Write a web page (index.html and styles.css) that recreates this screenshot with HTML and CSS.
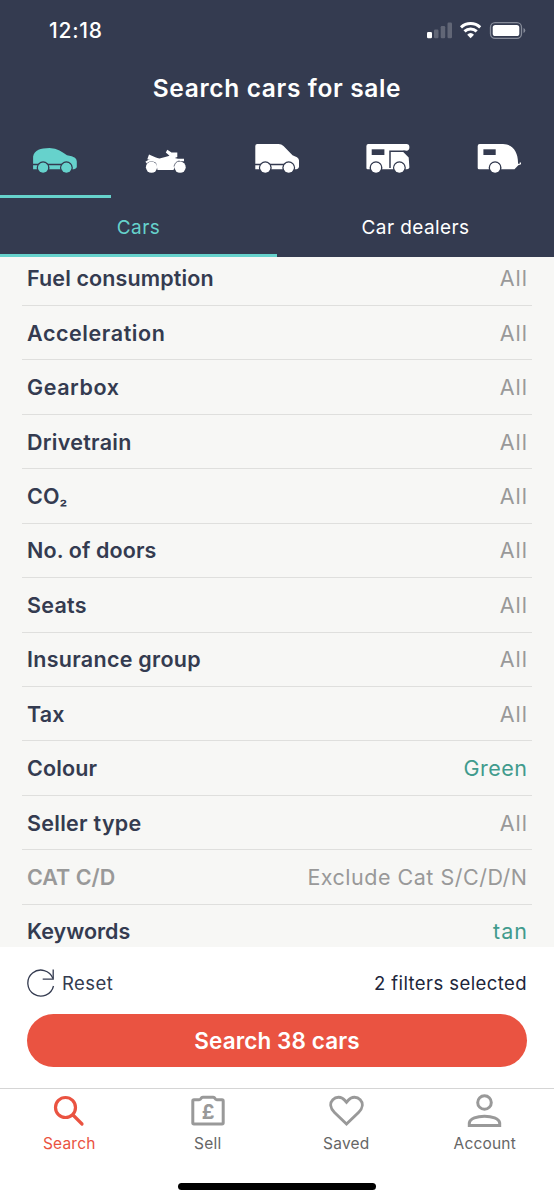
FILE: index.html
```html
<!DOCTYPE html>
<html lang="en">
<head>
<meta charset="utf-8">
<title>Search cars for sale</title>
<link rel="stylesheet" href="styles.css">
</head>
<body>
<div class="app">
  <header class="header">
    <div class="status">
      <span class="time">12:18</span>
      <svg class="status-icons" width="100" height="20" viewBox="0 0 100 20">
        <g fill="#fff">
          <rect x="1" y="12" width="5" height="6.300" rx="1.200"/>
          <g opacity=".22"><rect x="8" y="9.500" width="4.500" height="8.800" rx="1.200"/><rect x="14.700" y="6" width="4.500" height="12.300" rx="1.200"/><rect x="21.500" y="2.500" width="4.500" height="15.800" rx="1.200"/></g>
        </g>
        <g fill="none" stroke="#fff" stroke-width="3">
          <path d="M35 7.300a14.200 14.200 0 0 1 19.200 0"/>
          <path d="M38.500 11.400a9 9 0 0 1 12.200 0"/>
        </g>
        <path d="M41.200 14.700a5 5 0 0 1 6.800 0L44.600 18.300z" fill="#fff"/>
        <rect x="64.500" y="2.700" width="31" height="15.600" rx="4.600" fill="none" stroke="#868b99" stroke-width="1.300"/>
        <rect x="66.700" y="4.900" width="26.600" height="11.200" rx="2.600" fill="#fff"/>
        <path d="M97.500 8v5q1.800-.8 1.800-2.500t-1.800-2.500z" fill="#868b99"/>
      </svg>
    </div>
    <h1 class="title">Search cars for sale</h1>
    <nav class="vehicles">
      <a class="vehicle vehicle-active">
        <svg width="48" height="32" viewBox="-.500 0 48 32">
          <path fill="#66d2cc" d="M1.600 27.300V14.500Q2.500 10 7 7.800Q11 6 18 6Q24 6 28 8.500Q31.500 10.500 35.500 13.300Q41 14 43.500 15.800Q45.300 17.300 45.300 19.500V25.300Q44.500 27 42.500 27.300z"/>
          <g class="cutout"><path d="M1 22.500H35"/><circle cx="11.600" cy="25.700" r="5.700"/><circle cx="34.900" cy="25.700" r="5.700"/></g>
          <g fill="#66d2cc"><circle cx="11.600" cy="25.700" r="5"/><circle cx="34.900" cy="25.700" r="5"/></g>
        </svg>
      </a>
      <a class="vehicle">
        <svg width="48" height="32" viewBox="0 0 48 32" fill="#fff">
          <circle cx="9.500" cy="25.200" r="5.600"/><circle cx="38.100" cy="25.200" r="5.600"/>
          <path d="M7 12.500L13.300 15.300Q16 16.700 18.500 16.300L25 14.500L27.500 13.800L23.800 10.500L25.300 7.800L29.500 10.500H35.300V15L32.800 16L36 16.800H42V19.300H37L34 21.800L31.500 28H15.500L14 20Q10 18 5.300 17.200z"/>
          <path d="M4 20.500Q10 15.500 16 21" fill="none" stroke="#fff" stroke-width="2"/>
          <path d="M32 17L38 25" fill="none" stroke="#fff" stroke-width="2"/>
          <path d="M32 24.500Q33 19.500 37.500 18.900" fill="none" stroke="#343b50" stroke-width=".7"/>
        </svg>
      </a>
      <a class="vehicle">
        <svg width="48" height="32" viewBox="0 0 48 32">
          <path fill="#fff" d="M2.300 27.300V4Q2.300 2 4.300 2H25.500Q28.500 2 30.500 4L39.500 13.200L44 15.200Q46 16.500 46 18.500V25Q45.500 27 43.500 27.300z"/>
          <g class="cutout"><path d="M2 22.500H35"/><circle cx="12.300" cy="25.700" r="5.700"/><circle cx="35.700" cy="25.700" r="5.700"/></g>
          <g fill="#fff"><circle cx="12.300" cy="25.700" r="5"/><circle cx="35.700" cy="25.700" r="5"/></g>
        </svg>
      </a>
      <a class="vehicle">
        <svg width="48" height="32" viewBox=".500 0 48 32">
          <path fill="#fff" d="M2.900 26V4Q2.900 2 4.900 2H42.900Q45.900 2 45.900 5.300T42.900 8.700H39.500L39.500 9.700L45.200 15.500L45.900 25.500Q45.500 27.300 43.500 27.300H4.200Q2.900 27.300 2.900 26z"/>
          <path fill="#343b50" d="M8.200 7.300H20.900V13H8.200z"/>
          <g class="cutout"><path d="M26.500 26V9.300H42"/><circle cx="12.500" cy="25.700" r="5.700"/><circle cx="35.900" cy="25.700" r="5.700"/></g>
          <g fill="#fff"><circle cx="12.500" cy="25.700" r="5"/><circle cx="35.900" cy="25.700" r="5"/></g>
        </svg>
      </a>
      <a class="vehicle">
        <svg width="48" height="32" viewBox="0 0 48 32">
          <path fill="#fff" d="M2.700 26V4Q2.700 2 4.700 2H28C38 2.300 43 10 43 20.500V21.700H44.700V20.500H46V22.300L43.300 23.300L39.500 27.300H4Q2.700 27.300 2.700 26z"/>
          <path fill="#343b50" d="M8.400 7.300H20.700V13H8.400z"/>
          <g class="cutout"><circle cx="20.100" cy="25.700" r="5.700"/></g>
          <circle cx="20.100" cy="25.700" r="5" fill="#fff"/>
        </svg>
      </a>
    </nav>
    <nav class="tabs">
      <a class="tab tab-active">Cars</a>
      <a class="tab">Car dealers</a>
    </nav>
  </header>

  <main class="list">
    <div class="row"><span class="label snug">Fuel consumption</span><span class="value wide">All</span></div>
    <div class="row"><span class="label loose">Acceleration</span><span class="value wide">All</span></div>
    <div class="row"><span class="label loose">Gearbox</span><span class="value wide">All</span></div>
    <div class="row"><span class="label">Drivetrain</span><span class="value wide">All</span></div>
    <div class="row"><span class="label snug">CO<span class="subscript">₂</span></span><span class="value wide">All</span></div>
    <div class="row"><span class="label snug">No. of doors</span><span class="value wide">All</span></div>
    <div class="row"><span class="label">Seats</span><span class="value wide">All</span></div>
    <div class="row"><span class="label">Insurance group</span><span class="value wide">All</span></div>
    <div class="row"><span class="label snug">Tax</span><span class="value wide">All</span></div>
    <div class="row"><span class="label snug">Colour</span><span class="value chosen">Green</span></div>
    <div class="row"><span class="label">Seller type</span><span class="value wide">All</span></div>
    <div class="row disabled"><span class="label tight">CAT C/D</span><span class="value">Exclude Cat S/C/D/N</span></div>
    <div class="row"><span class="label tight">Keywords</span><span class="value wide chosen">tan</span></div>
  </main>

  <section class="actions">
    <div class="summary">
      <span class="reset">
        <svg width="28" height="28" viewBox="0 0 28 28" fill="none" stroke="#343b50" stroke-width="1.300">
          <path d="M26 9.500A13 13 0 1 0 26.500 17"/><path d="M26.200.5V10.200H15.700"/>
        </svg>
        <span>Reset</span>
      </span>
      <span class="count">2 filters selected</span>
    </div>
    <button class="search">Search 38 cars</button>
  </section>

  <footer class="footer">
    <nav class="nav">
      <a class="nav-item nav-active">
        <svg width="36" height="36" viewBox="0 0 36 36" fill="none" stroke="#ea5341" stroke-width="3.200" stroke-linecap="round"><circle cx="14.500" cy="15.500" r="10"/><path d="M22 23L31 32"/></svg>
        <span>Search</span>
      </a>
      <a class="nav-item">
        <svg width="36" height="36" viewBox="0 0 36 36"><path fill="none" stroke="#999" stroke-width="3" stroke-linejoin="round" d="M4 7.700H9.200Q10.500 7.700 11 6.500Q11.600 5.300 12.800 5.300H23.200Q24.400 5.300 25 6.500Q25.500 7.700 26.800 7.700H32Q33.200 7.700 33.200 8.900V30.700Q33.200 31.900 32 31.900H4Q2.800 31.900 2.800 30.700V8.900Q2.800 7.700 4 7.700z"/><text class="pound" x="18.300" y="26.700">£</text></svg>
        <span>Sell</span>
      </a>
      <a class="nav-item">
        <svg width="36" height="36" viewBox="-.500 0 36 36" fill="none" stroke="#999" stroke-width="2.900"><path d="M18 32L6 20.500C1.500 16 1.200 11 4.300 7.700C7.500 4.200 13 4.400 16 8L18 10.300L20 8C23 4.400 28.500 4.200 31.700 7.700C34.800 11 34.500 16 30 20.500z"/></svg>
        <span>Saved</span>
      </a>
      <a class="nav-item">
        <svg width="36" height="36" viewBox=".500 .500 36 36" fill="none" stroke="#999" stroke-width="3"><circle cx="18" cy="11" r="6.800"/><path d="M2.800 34V31.500C4 22.500 32 22.500 33.200 31.500V34z"/></svg>
        <span>Account</span>
      </a>
    </nav>
    <div class="home-bar"></div>
  </footer>
</div>
</body>
</html>
```
FILE: styles.css
```css
* { box-sizing: border-box; }
body { margin: 0; font-family: Inter, "Open Sans", sans-serif; background: #fff; }
.app { width: 554px; height: 1200px; display: flex; flex-direction: column; overflow: hidden; }
.header { height: 257px; flex: none; background: #343b50; color: #fff; display: flex; flex-direction: column; }
.status { height: 60px; padding: 0 28.500px 0 49px; display: flex; justify-content: space-between; align-items: center; }
.time { font-size: 21px; font-weight: 500; line-height: 24px; letter-spacing: .75px; padding-top: 2px; }
.title { margin: 0; height: 56px; line-height: 56px; text-align: center; font-size: 24.500px; font-weight: 600; letter-spacing: .65px; }
.vehicles { height: 82px; display: grid; grid-template-columns: repeat(5, 1fr); }
.vehicle { display: flex; justify-content: center; align-items: flex-start; padding-top: 26px; border-bottom: 2px solid transparent; }
.vehicle svg { display: block; }
.vehicle-active { border-bottom-width: 3px; border-color: #66d2cc; }
.cutout { fill: none; stroke: #343b50; stroke-width: 1.500; }
.tabs { height: 59px; display: grid; grid-template-columns: 1fr 1fr; }
.tab { display: flex; justify-content: center; align-items: center; font-size: 19px; letter-spacing: .4px; padding-top: 2px; border-bottom: 3px solid transparent; }
.tab-active { color: #66d2cc; border-color: #66d2cc; }
.list { height: 690px; flex: none; background: #f7f7f5; padding: 0 22px; overflow: hidden; }
.row { height: 54.450px; padding: 0 5px; display: flex; justify-content: space-between; align-items: center; border-bottom: 1px solid #dfdfdd; font-size: 21.500px; color: #999; }
.row:first-child { margin-top: -5.500px; }
.label { font-weight: 600; color: #343b50; letter-spacing: .28px; }
.snug { letter-spacing: .12px; }
.loose { letter-spacing: .57px; }
.tight { letter-spacing: 0; }
.subscript { font-size: 17px; }
.value { letter-spacing: .5px; margin-right: -.5px; }
.wide { letter-spacing: 1px; margin-right: -1px; }
.disabled .label { color: #999; }
.chosen { color: #419b8d; }
.actions { height: 141px; flex: none; padding: 22px 27px 0; color: #343b50; }
.summary { height: 28px; display: flex; justify-content: space-between; align-items: center; font-size: 18.500px; letter-spacing: .42px; }
.reset { display: flex; align-items: center; gap: 7px; }
.count { color: #20253a; }
.search { display: block; width: 100%; height: 53px; margin-top: 17px; padding: 0; border: 0; border-radius: 27px; background: #ea5341; color: #fff; font: 600 22.500px/53px Inter, sans-serif; letter-spacing: .1px; }
.footer { height: 112px; flex: none; border-top: 1px solid #d5d5d5; display: flex; flex-direction: column; align-items: center; }
.nav { width: 100%; height: 94px; display: grid; grid-template-columns: repeat(4, 1fr); }
.nav-item { display: flex; flex-direction: column; align-items: center; padding-top: 3px; gap: 5px; font-size: 15.500px; line-height: 22px; letter-spacing: .2px; color: #666; }
.nav-active { color: #ea5341; }
.pound { font: 700 20px Inter, sans-serif; fill: #999; text-anchor: middle; }
.home-bar { width: 198px; height: 7px; border-radius: 4px; background: #000; }
```
